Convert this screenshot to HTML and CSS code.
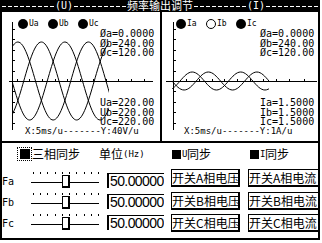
FILE: index.html
```html
<!DOCTYPE html>
<html lang="zh">
<head>
<meta charset="utf-8">
<title>频率输出调节</title>
<link rel="stylesheet" href="styles.css">
</head>
<body>
<div class="screen">
  <header class="titlebar">
    <span class="dash"></span><span class="tag">(U)</span><span class="dash"></span>
    <span class="title">频率输出调节</span>
    <span class="dash"></span><span class="tag">(I)</span><span class="dash"></span>
  </header>

  <section class="scopes">
    <div class="chart chart-u">
      <svg class="plot" width="158" height="129" viewBox="0 0 158 129">
        <defs>
          <clipPath id="clip-u"><rect x="10" y="0" width="97" height="129"/></clipPath>
          <path id="wave-u" vector-effect="non-scaling-stroke" d="M-8,0c.32613,.51229 .63809,1 1,1s.67387,-.48771 1,-1s.63809,-1 1,-1s.67387,.48771 1,1s.63809,1 1,1s.67387,-.48771 1,-1s.63809,-1 1,-1s.67387,.48771 1,1s.63809,1 1,1s.67387,-.48771 1,-1s.63809,-1 1,-1s.67387,.48771 1,1s.63809,1 1,1s.67387,-.48771 1,-1s.63809,-1 1,-1s.67387,.48771 1,1s.63809,1 1,1s.67387,-.48771 1,-1s.63809,-1 1,-1s.67387,.48771 1,1s.63809,1 1,1"/>
        </defs>
        <g fill="#000" shape-rendering="crispEdges">
          <rect x="10" y="10" width="1" height="108"/>
          <rect x="7" y="69" width="144" height="1"/>
          <rect x="11" y="17" width="2" height="1"/><rect x="11" y="27" width="2" height="1"/>
          <rect x="11" y="38" width="2" height="1"/><rect x="11" y="48" width="2" height="1"/>
          <rect x="11" y="59" width="2" height="1"/><rect x="11" y="79" width="2" height="1"/>
          <rect x="11" y="90" width="2" height="1"/><rect x="11" y="100" width="2" height="1"/>
          <rect x="11" y="111" width="2" height="1"/>
          <rect x="15" y="67" width="1" height="2"/><rect x="27" y="67" width="1" height="2"/>
          <rect x="40" y="67" width="1" height="2"/><rect x="53" y="67" width="1" height="2"/>
          <rect x="65" y="67" width="1" height="2"/><rect x="78" y="67" width="1" height="2"/>
          <rect x="91" y="67" width="1" height="2"/><rect x="104" y="67" width="1" height="2"/>
          <rect x="116" y="67" width="1" height="2"/><rect x="129" y="67" width="1" height="2"/>
          <rect x="142" y="67" width="1" height="2"/>
        </g>
        <g clip-path="url(#clip-u)" fill="none" stroke="#000" stroke-width="1" shape-rendering="crispEdges">
          <use href="#wave-u" transform="translate(10 69) scale(17.625 39)"/>
          <use href="#wave-u" transform="translate(33.5 69) scale(17.625 39)"/>
          <use href="#wave-u" transform="translate(57 69) scale(17.625 39)"/>
        </g>
      </svg>
      <div class="overlay">
        <div class="legend">
          <span class="leg"><i class="dot"></i>Ua</span>
          <span class="leg"><i class="dot"></i>Ub</span>
          <span class="leg"><i class="dot"></i>Uc</span>
        </div>
        <div class="readout">
          <div>Øa=0.0000</div>
          <div>Øb=240.00</div>
          <div>Øc=120.00</div>
        </div>
        <div class="readout values">
          <div>Ua=220.00</div>
          <div>Ub=220.00</div>
          <div>Uc=220.00</div>
        </div>
        <div class="scale">X:5ms/u-------Y:40V/u</div>
      </div>
    </div>

    <div class="chart chart-i">
      <svg class="plot" width="156" height="129" viewBox="0 0 156 129">
        <defs>
          <clipPath id="clip-i"><rect x="10" y="0" width="97" height="129"/></clipPath>
          <path id="wave-i" vector-effect="non-scaling-stroke" d="M-8,0c.32613,.51229 .63809,1 1,1s.67387,-.48771 1,-1s.63809,-1 1,-1s.67387,.48771 1,1s.63809,1 1,1s.67387,-.48771 1,-1s.63809,-1 1,-1s.67387,.48771 1,1s.63809,1 1,1s.67387,-.48771 1,-1s.63809,-1 1,-1s.67387,.48771 1,1s.63809,1 1,1s.67387,-.48771 1,-1s.63809,-1 1,-1s.67387,.48771 1,1s.63809,1 1,1s.67387,-.48771 1,-1s.63809,-1 1,-1s.67387,.48771 1,1s.63809,1 1,1"/>
        </defs>
        <g fill="#000" shape-rendering="crispEdges">
          <rect x="11" y="10" width="1" height="108"/>
          <rect x="4" y="69" width="151" height="1"/>
          <rect x="12" y="17" width="2" height="1"/><rect x="12" y="27" width="2" height="1"/>
          <rect x="12" y="38" width="2" height="1"/><rect x="12" y="48" width="2" height="1"/>
          <rect x="12" y="59" width="2" height="1"/><rect x="12" y="79" width="2" height="1"/>
          <rect x="12" y="90" width="2" height="1"/><rect x="12" y="100" width="2" height="1"/>
          <rect x="12" y="111" width="2" height="1"/>
          <rect x="24" y="67" width="1" height="2"/><rect x="37" y="67" width="1" height="2"/>
          <rect x="50" y="67" width="1" height="2"/><rect x="62" y="67" width="1" height="2"/>
          <rect x="75" y="67" width="1" height="2"/><rect x="88" y="67" width="1" height="2"/>
          <rect x="101" y="67" width="1" height="2"/><rect x="114" y="67" width="1" height="2"/>
          <rect x="127" y="67" width="1" height="2"/><rect x="142" y="67" width="1" height="2"/>
        </g>
        <g clip-path="url(#clip-i)" fill="none" stroke="#000" stroke-width="1" shape-rendering="crispEdges">
          <use href="#wave-i" transform="translate(10 69) scale(12.125 9)"/>
          <use href="#wave-i" transform="translate(42.333 69) scale(12.125 9)"/>
        </g>
      </svg>
      <div class="overlay">
        <div class="legend">
          <span class="leg"><i class="dot"></i>Ia</span>
          <span class="leg"><i class="dot off"></i>Ib</span>
          <span class="leg"><i class="dot"></i>Ic</span>
        </div>
        <div class="readout">
          <div>Øa=0.0000</div>
          <div>Øb=240.00</div>
          <div>Øc=120.00</div>
        </div>
        <div class="readout values">
          <div>Ia=1.5000</div>
          <div>Ib=1.5000</div>
          <div>Ic=1.5000</div>
        </div>
        <div class="scale">X:5ms/u-------Y:1A/u</div>
      </div>
    </div>
  </section>

  <section class="controls">
    <div class="freq">
      <div class="freq-head">
        <div class="sync-main">
          <span class="focus"><i class="sq-big"></i></span>
          <span class="cn">三相同步</span>
        </div>
        <div class="unit"><span class="cn">单位</span><span class="small">(Hz)</span></div>
      </div>
      <div class="frows">
        <div class="frow">
          <span class="flabel">Fa</span>
          <div class="slider">
            <div class="ticks"></div>
            <div class="track"><i class="rail rail-l"></i><i class="thumb"></i><i class="rail rail-r"></i></div>
          </div>
          <div class="fbox">50.00000</div>
        </div>
        <div class="frow">
          <span class="flabel">Fb</span>
          <div class="slider">
            <div class="ticks"></div>
            <div class="track"><i class="rail rail-l"></i><i class="thumb"></i><i class="rail rail-r"></i></div>
          </div>
          <div class="fbox">50.00000</div>
        </div>
        <div class="frow">
          <span class="flabel">Fc</span>
          <div class="slider">
            <div class="ticks"></div>
            <div class="track"><i class="rail rail-l"></i><i class="thumb"></i><i class="rail rail-r"></i></div>
          </div>
          <div class="fbox">50.00000</div>
        </div>
      </div>
    </div>

    <div class="sync">
      <div class="sync-head">
        <div class="chk"><i class="sq"></i><span class="small-l">U</span><span class="cn">同步</span></div>
        <div class="chk chk-2"><i class="sq"></i><span class="small-l">I</span><span class="cn">同步</span></div>
      </div>
      <div class="btns">
        <div class="btn">开关A相电压</div>
        <div class="btn">开关A相电流</div>
        <div class="btn">开关B相电压</div>
        <div class="btn">开关B相电流</div>
        <div class="btn">开关C相电压</div>
        <div class="btn">开关C相电流</div>
      </div>
    </div>
  </section>
</div>
</body>
</html>
```

FILE: styles.css
```css
* { box-sizing: border-box; margin: 0; padding: 0; }
html, body { background: #fff; }
body {
  width: 322px;
  height: 243px;
  overflow: hidden;
  font-family: "DejaVu Sans Mono", "Liberation Mono", monospace;
  color: #000;
}
i { display: block; font-style: normal; }

.screen {
  width: 320px;
  height: 240px;
  border: 2px solid #000;
  border-top: 0;
  display: flex;
  flex-direction: column;
  overflow: hidden;
}

/* title bar */
.titlebar {
  flex: none;
  height: 12px;
  background: #000;
  color: #fff;
  display: flex;
  align-items: flex-start;
}
.dash {
  flex: 1;
  height: 1px;
  margin-top: 6px;
  background: repeating-linear-gradient(to right, #fff 0 4px, transparent 4px 6px);
}
.tag {
  flex: none;
  padding: 0 1px;
  font-size: 10px;
  line-height: 12px;
}
.title {
  flex: none;
  height: 12px;
  padding: 0 1px;
  font-family: "Noto Sans CJK SC", sans-serif;
  font-size: 11px;
  line-height: 11px;
  white-space: nowrap;
}

/* scope panels */
.scopes {
  flex: none;
  height: 131px;
  display: grid;
  grid-template-columns: 160px 156px;
  border-bottom: 2px solid #000;
}
.chart {
  display: grid;
  height: 129px;
}
.chart > * { grid-area: 1 / 1; }
.chart-u { border-right: 2px solid #000; }
.plot { display: block; }

.overlay {
  display: flex;
  flex-direction: column;
  padding-top: 7px;
  padding-bottom: 5px;
}
.legend {
  display: flex;
  height: 10px;
  padding-left: 16px;
  font-size: 8px;
  line-height: 10px;
}
.chart-i .legend { padding-left: 14px; }
.leg {
  width: 30px;
  display: flex;
  align-items: center;
  gap: 1px;
}
.dot {
  width: 10px;
  height: 10px;
  border-radius: 50%;
  background: #000;
}
.dot.off {
  background: #fff;
  border: 1px solid #000;
}
.readout {
  padding-left: 98px;
  font-size: 10px;
  line-height: 9.5px;
  white-space: nowrap;
}
.values { margin-top: auto; }
.scale {
  padding-left: 23px;
  font-size: 9px;
  line-height: 9.5px;
  white-space: nowrap;
}
.chart-i .scale { padding-left: 22px; }

/* bottom controls */
.controls {
  flex: 1;
  display: grid;
  grid-template-columns: 158px 158px;
}
.cn {
  font-family: "Noto Sans CJK SC", sans-serif;
  font-size: 12px;
  line-height: 14px;
}
.small { font-size: 9px; line-height: 14px; }
.small-l { font-size: 9px; line-height: 14px; width: 4px; margin: 0 1px; }

.freq { padding-top: 4px; }
.freq-head {
  display: grid;
  grid-template-columns: 97px auto;
  height: 14px;
  align-items: center;
}
.sync-main { display: flex; align-items: center; }
.focus {
  width: 15px;
  height: 14px;
  margin-left: 15px;
  border: 1px dotted #000;
  display: flex;
  align-items: center;
  justify-content: center;
}
.sq-big { width: 10px; height: 10px; background: #000; }
.unit { display: flex; align-items: center; }

.frows { margin-top: 9px; }
.frow {
  display: grid;
  grid-template-columns: 21px 68px 57px;
  column-gap: 8px;
  height: 21px;
}
.flabel {
  font-size: 10px;
  line-height: 10px;
  padding-top: 7px;
}
.slider { display: flex; flex-direction: column; }
.ticks {
  width: 66px;
  height: 2px;
  margin: 2px 0 0 2px;
  background: repeating-linear-gradient(to right, #000 0 1px, transparent 1px 7.22px);
}
.track { display: flex; height: 13px; margin-top: 1px; }
.rail { height: 1px; margin-top: 7px; background: #000; }
.rail-l { width: 31px; }
.rail-r { flex: 1; }
.thumb {
  width: 8px;
  height: 13px;
  background: #fff;
  border: 1px solid #000;
  border-right-width: 2px;
  border-bottom-width: 2px;
}
.fbox {
  margin-top: 3px;
  height: 15px;
  border-top: 1px solid #000;
  border-left: 2px solid #000;
  padding-left: 1px;
  font-family: "Liberation Sans", Arial, sans-serif;
  font-size: 14px;
  line-height: 14px;
  letter-spacing: -0.6px;
  white-space: nowrap;
  overflow: hidden;
}

.sync { padding: 4px 0 0 11px; }
.sync-head {
  display: grid;
  grid-template-columns: 77px 77px;
  height: 14px;
  align-items: center;
}
.chk { display: flex; align-items: center; }
.sq { width: 9px; height: 9px; margin-left: 1px; background: #000; }
.chk-2 .sq { margin-left: 2px; }
.btns {
  display: grid;
  grid-template-columns: 69px 72px;
  column-gap: 8px;
  row-gap: 4.5px;
  margin-top: 8px;
}
.btn {
  height: 18px;
  border: 1px solid #000;
  border-right-width: 2px;
  border-bottom-width: 2px;
  display: flex;
  align-items: center;
  font-family: "Noto Sans CJK SC", sans-serif;
  font-size: 12px;
  line-height: 15px;
  white-space: nowrap;
  overflow: hidden;
}
```
